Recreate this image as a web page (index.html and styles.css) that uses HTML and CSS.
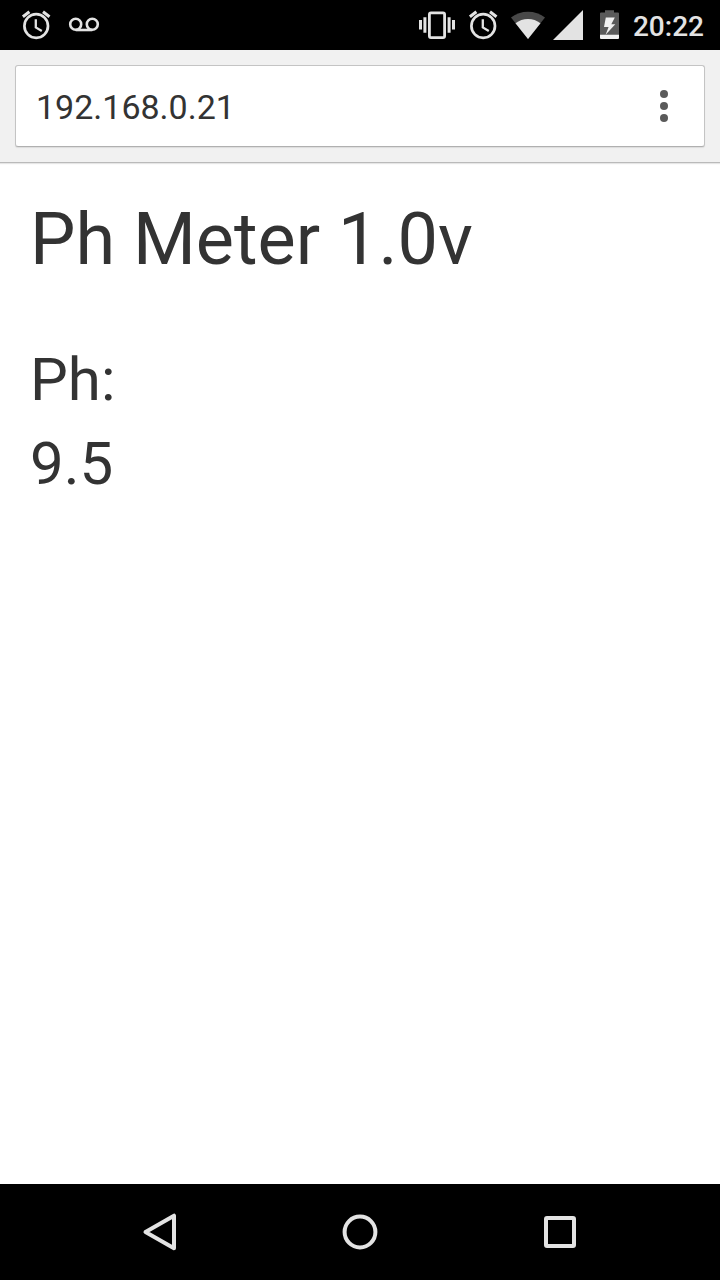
FILE: index.html
```html
<!DOCTYPE html>
<html lang="en">
<head>
<meta charset="utf-8">
<meta name="viewport" content="width=device-width, initial-scale=1">
<title>Ph Meter</title>
<link rel="stylesheet" href="styles.css">
</head>
<body>
<div class="screen">
  <header class="status">
    <svg class="icon" width="32" height="32" viewBox="20 10 32 32" role="img" aria-label="Alarm">
      <g fill="none" stroke="#e3e3e3">
        <circle cx="36.2" cy="26" r="11.8" stroke-width="2.7"/>
        <path d="M22.9 16.8 29.4 11.7M43 11.7 49.5 16.8" stroke-width="3"/>
        <path d="M35.8 19.2V27.4L41.8 31" stroke-width="2.3"/>
      </g>
    </svg>
    <svg class="icon" width="32" height="32" viewBox="68 10 32 32" role="img" aria-label="Voicemail">
      <g fill="none" stroke="#e3e3e3" stroke-width="2.6">
        <circle cx="75.7" cy="24.3" r="5.5"/>
        <circle cx="92.3" cy="24.3" r="5.5"/>
        <path d="M75.7 30H92.3"/>
      </g>
    </svg>
    <div class="status-right">
      <svg class="icon" width="36" height="32" viewBox="419 10 36 32" role="img" aria-label="Vibrate">
        <rect x="429.4" y="12.8" width="15.2" height="24.8" rx="1.6" fill="none" stroke="#e3e3e3" stroke-width="2.8"/>
        <path d="M419 20h3v9.5h-3zM423.4 17.2h3v15.6h-3zM447.6 17.2h3v15.6h-3zM452 20h3v9.5h-3z" fill="#e3e3e3"/>
      </svg>
      <svg class="icon" width="32" height="32" viewBox="20 10 32 32" role="img" aria-label="Alarm">
        <g fill="none" stroke="#e3e3e3">
          <circle cx="36.2" cy="26" r="11.8" stroke-width="2.7"/>
          <path d="M22.9 16.8 29.4 11.7M43 11.7 49.5 16.8" stroke-width="3"/>
          <path d="M35.8 19.2V27.4L41.8 31" stroke-width="2.3"/>
        </g>
      </svg>
      <svg class="icon" width="34" height="32" viewBox="511 10 34 32" role="img" aria-label="Wi-Fi">
        <path d="M528 39 511 17.6A27.6 27.6 0 0 1 545 17.6Z" fill="#484848"/>
        <path d="M528 39 515.5 23.2A20.4 20.4 0 0 1 540.5 23.2Z" fill="#e3e3e3"/>
      </svg>
      <svg class="icon signal" width="30" height="32" viewBox="553 10 30 32" role="img" aria-label="Mobile signal">
        <path d="M583 10V40H553Z" fill="#e3e3e3"/>
      </svg>
      <svg class="icon battery" width="19" height="32" viewBox="0 10 19 32" role="img" aria-label="Battery charging">
        <path d="M5 10.2h9v2.3h4a1 1 0 0 1 1 1V35H0V13.500a1 1 0 0 1 1-1h4z" fill="#5a5a5a"/>
        <path d="M0 34.700h19V38a1 1 0 0 1-1 1H1a1 1 0 0 1-1-1z" fill="#f1f1f1"/>
        <path d="M5.800 17.500H14.800L11.300 24.200H15.300L5.600 34.800 8.600 27H4z" fill="#f1f1f1"/>
      </svg>
      <time class="clock" datetime="20:22">20:22</time>
    </div>
  </header>

  <form class="toolbar">
    <div class="omnibox">
      <input class="url" type="text" value="192.168.0.21" aria-label="Address" spellcheck="false">
      <button class="menu" type="button" aria-label="Menu">
        <svg width="8" height="32" viewBox="0 0 8 32" aria-hidden="true">
          <g fill="#5a5a5a"><circle cx="4" cy="4" r="4"/><circle cx="4" cy="16" r="4"/><circle cx="4" cy="28" r="4"/></g>
        </svg>
      </button>
    </div>
  </form>

  <main class="page">
    <h1 class="title">Ph Meter 1.0v</h1>
    <p class="reading">Ph:</p>
    <p class="reading">9.5</p>
  </main>

  <nav class="navbar" aria-label="System navigation">
    <button class="nav-button" type="button" aria-label="Back">
      <svg width="40" height="40" viewBox="0 0 40 40" aria-hidden="true"><path d="M5.500 20 34 3.700V36.300Z" fill="none" stroke="#e3e3e3" stroke-width="4" stroke-linejoin="round"/></svg>
    </button>
    <button class="nav-button" type="button" aria-label="Home">
      <svg width="40" height="40" viewBox="0 0 40 40" aria-hidden="true"><circle cx="20" cy="20" r="15.400" fill="none" stroke="#e3e3e3" stroke-width="4"/></svg>
    </button>
    <button class="nav-button" type="button" aria-label="Recent apps">
      <svg width="40" height="40" viewBox="0 0 40 40" aria-hidden="true"><rect x="6" y="6" width="28" height="28" rx="1" fill="none" stroke="#e3e3e3" stroke-width="4"/></svg>
    </button>
  </nav>
</div>
</body>
</html>
```
FILE: styles.css
```css
* {
  box-sizing: border-box;
}

body {
  margin: 0;
  background: #fff;
  color: #333;
  font-family: Roboto, "Liberation Sans", sans-serif;
}

button,
input {
  border: 0;
  padding: 0;
  background: none;
  font: inherit;
  color: inherit;
}

svg {
  display: block;
  flex: none;
}

.screen {
  display: flex;
  flex-direction: column;
  min-height: 100vh;
}

.status {
  display: flex;
  align-items: center;
  gap: 16px;
  height: 50px;
  padding: 2px 16px 0 20px;
  background: #000;
}

.status-right {
  display: flex;
  align-items: center;
  gap: 12px;
  margin-left: auto;
}

.signal {
  margin-left: -4px;
}

.battery {
  margin-left: 5px;
}

.clock {
  padding: 2px 0 0 2px;
  color: #e3e3e3;
  font-size: 28px;
  font-weight: 500;
  line-height: 32px;
}

.toolbar {
  padding: 15px;
  background: #f1f1f1;
  border-bottom: 1px solid #bababa;
  box-shadow: 0 1px 1px #e6e6e6;
}

.omnibox {
  display: flex;
  align-items: center;
  height: 82px;
  padding-left: 20px;
  background: #fff;
  border: 1px solid #c4c4c4;
  border-bottom-color: #b0b0b0;
  border-radius: 3px;
  box-shadow: 0 1px 1px #dcdcdc;
}

.url {
  flex: 1;
  min-width: 0;
  height: 80px;
  padding-top: 2px;
  font-size: 34px;
  outline: 0;
}

.menu {
  display: grid;
  place-items: center;
  width: 80px;
  height: 80px;
}

.page {
  flex: 1;
  padding: 37px 30px;
}

.title {
  margin: 0 0 58px;
  font-size: 72px;
  font-weight: 400;
  line-height: 80px;
}

.reading {
  margin: 0;
  font-size: 60px;
  line-height: 84px;
}

.navbar {
  display: flex;
  justify-content: center;
  gap: 8px;
  height: 96px;
  background: #000;
}

.nav-button {
  display: grid;
  place-items: center;
  flex: 0 1 192px;
}
```
